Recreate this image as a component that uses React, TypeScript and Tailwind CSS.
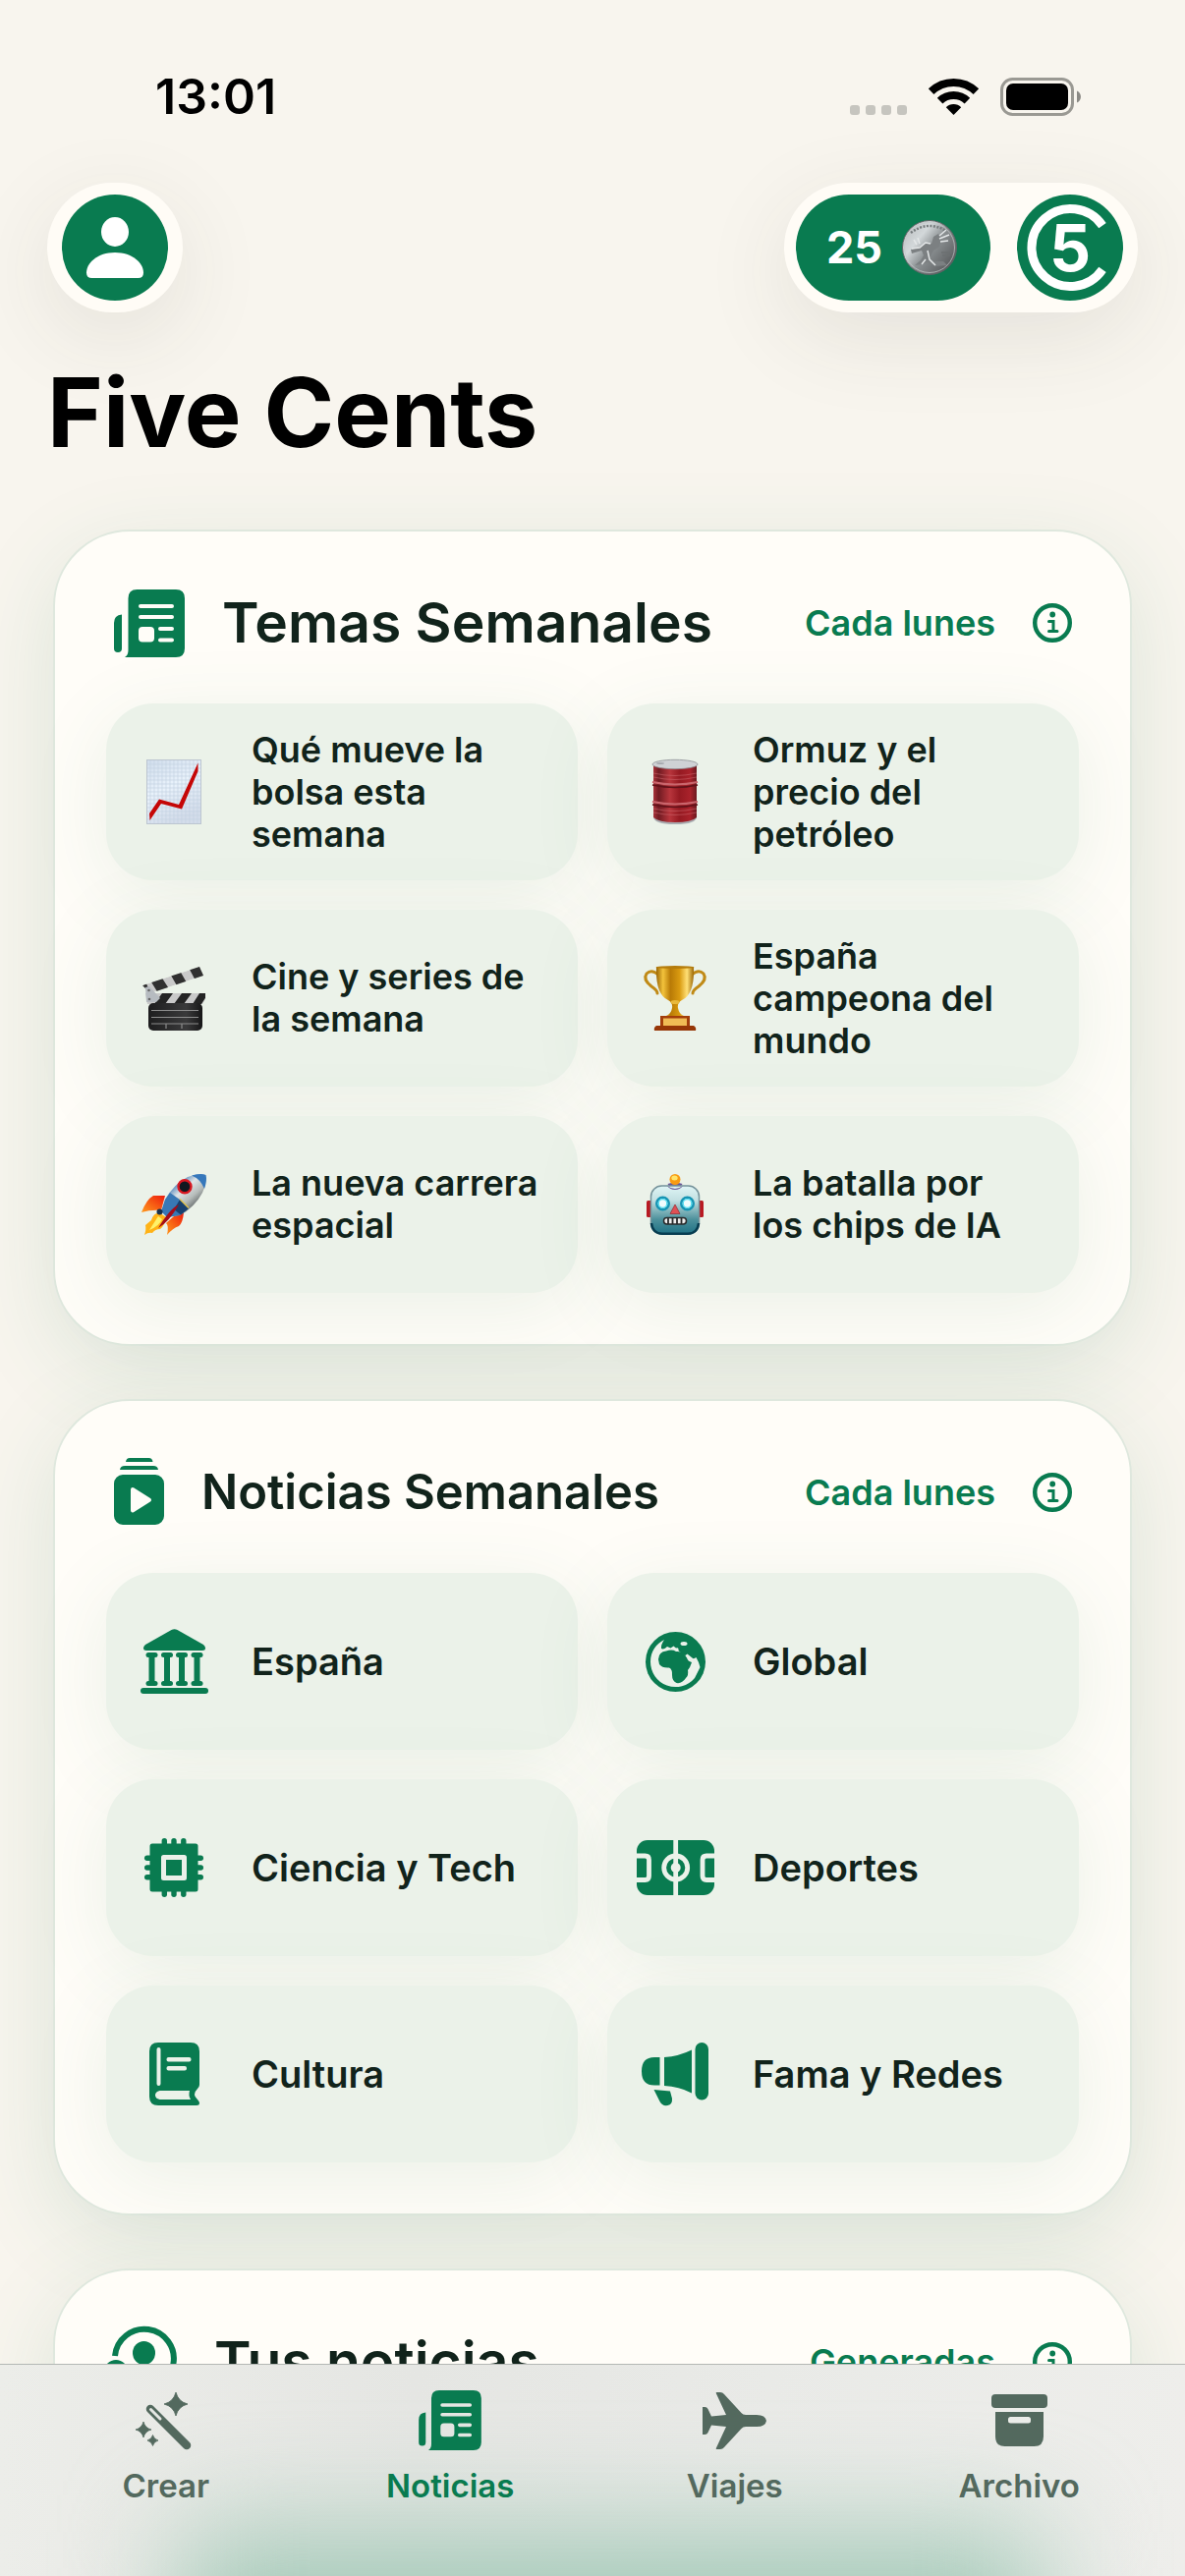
import { useId, type ReactNode } from "react";

/* ---------- drawing helpers ---------- */

const rr = (x: number, y: number, w: number, h: number, r: number) =>
  `M${x + r} ${y}h${w - 2 * r}a${r} ${r} 0 0 1 ${r} ${r}v${h - 2 * r}a${r} ${r} 0 0 1 ${-r} ${r}h${2 * r - w}a${r} ${r} 0 0 1 ${-r} ${-r}v${2 * r - h}a${r} ${r} 0 0 1 ${r} ${-r}z`;

type ArtProps = { w: number; h: number; children: ReactNode };

function Art({ w, h, children }: ArtProps) {
  return (
    <svg
      width={w}
      height={h}
      viewBox={`0 0 ${w} ${h}`}
      fill="currentColor"
      className="shrink-0 overflow-visible"
      aria-hidden="true"
    >
      {children}
    </svg>
  );
}

/* ---------- status bar ---------- */

function WifiIcon() {
  return (
    <Art w={51} h={37}>
      <path d="M2.6 13.2A33 33 0 0 1 48.4 13.2" fill="none" stroke="currentColor" strokeWidth="8" />
      <path d="M11.6 22.6A20 20 0 0 1 39.4 22.6" fill="none" stroke="currentColor" strokeWidth="8" />
      <path d="M25.5 37L17.8 29.2A11 11 0 0 1 33.2 29.2Z" />
    </Art>
  );
}

function BatteryIcon() {
  return (
    <Art w={82} h={39}>
      <rect x="1.5" y="1.5" width="72" height="36" rx="11" fill="none" stroke="#9a9993" strokeWidth="3" />
      <rect x="6" y="6" width="63" height="27" rx="7" />
      <path d="M78 13.5c5.300 2 5.300 10 0 12z" fill="#8b8a85" />
    </Art>
  );
}

/* ---------- header art ---------- */

function PersonIcon() {
  return (
    <Art w={58} h={62}>
      <ellipse cx="29" cy="15" rx="14" ry="15" />
      <path d="M29 36C47 36 58 47 58 56.500Q58 62 52.500 62H5.500Q0 62 0 56.500C0 47 11 36 29 36Z" />
    </Art>
  );
}

function MoonCoin() {
  const id = useId();
  return (
    <Art w={56} h={56}>
      <defs>
        <linearGradient id={id} x1="0" y1="0.1" x2="1" y2="0.9">
          <stop offset="0" stopColor="#b9bdbf" />
          <stop offset="0.3" stopColor="#d3d8da" />
          <stop offset="0.52" stopColor="#8d9294" />
          <stop offset="1" stopColor="#4d4f51" />
        </linearGradient>
      </defs>
      <circle cx="28" cy="28" r="27.500" fill={`url(#${id})`} stroke="#5f6365" />
      <circle cx="28" cy="28" r="25.500" fill="none" stroke="#c3c7c9" strokeWidth="1" opacity="0.7" />
      <path d="M9 13Q26 0 45 11" fill="none" stroke="#777c7e" strokeWidth="2.500" strokeDasharray="2 1.500" />
      <path
        d="M9 30L17 28L23 24L30 24L32 17L37 14L40 19L38 27L32 31L29 37L31 42L42 42L46 46L34 47L26 43L20 45L13 46L19 41L22 36L20 31L10 34Z"
        fill="#7c8082"
      />
      <path
        d="M10 29L18 28L24 23L29 24M38 16L45 10M38 19L48 15M39 22L47 21M15 25L12 20M18 24L16 18M26 31L28 40L34 46M20 45L24 40"
        fill="none"
        stroke="#e3e6e7"
        strokeWidth="1.500"
      />
      <path d="M40 33h11M41 36h8" stroke="#6c7072" strokeWidth="1.300" />
    </Art>
  );
}

/* ---------- section icons ---------- */

function NewsIcon({ small = false }: { small?: boolean }) {
  return (
    <svg
      width={small ? 64 : 72}
      height={small ? 61 : 69}
      viewBox="0 0 72 69"
      fill="currentColor"
      className="shrink-0"
      aria-hidden="true"
    >
      <path
        fillRule="evenodd"
        d={
          "M23.500 0H63Q72 0 72 9V60Q72 69 63 69H11Q14.500 67 14.500 62V9Q14.500 0 23.500 0Z" +
          rr(25, 15, 36, 4, 2) +
          rr(25, 26, 36, 4, 2) +
          rr(25, 38, 16, 15.5, 4) +
          rr(45, 38, 16, 4, 2) +
          rr(45, 49.500, 16, 4, 2)
        }
      />
      <path d="M8 25.500V60Q8 64 4 64Q0 64 0 60V34Q0 26 8 25.500Z" />
    </svg>
  );
}

function PlayStackIcon() {
  return (
    <Art w={51} h={71}>
      <path d="M12 4Q12.500 0 16 0H35.500Q39 0 39.500 4Z" />
      <path d="M6 12Q6.500 8 11 8H40Q44.500 8 45 12Z" />
      <path
        fillRule="evenodd"
        d={rr(0, 17, 51, 51, 9) + "M17 32V53.500Q17.500 56.500 20 55.200L37 44.500Q39 42.700 37 41L20 30.300Q17.500 29 17 32Z"}
      />
    </Art>
  );
}

function PeopleIcon() {
  return (
    <Art w={64} h={72}>
      <path d="M1 30A30 30 0 1 1 24 62" fill="none" stroke="currentColor" strokeWidth="6" />
      <ellipse cx="30.500" cy="27" rx="11.500" ry="12" />
      <path d="M14 52Q20 42 30.500 42Q42 42 48 52Q40 60 30.500 60Z" />
      <circle cx="2" cy="46" r="12" />
    </Art>
  );
}

function InfoIcon() {
  return (
    <Art w={40} h={40}>
      <circle cx="20" cy="20" r="17.800" fill="none" stroke="currentColor" strokeWidth="4.400" />
      <circle cx="20.200" cy="11.500" r="2.900" />
      <path d="M16.500 18.500H21V28.500M16.500 28.500H25" fill="none" stroke="currentColor" strokeWidth="3" strokeLinecap="round" />
    </Art>
  );
}

/* ---------- news tiles ---------- */

function BankIcon() {
  return (
    <Art w={69} h={66}>
      <path d="M31.500 1Q34.500 -0.600 37.500 1L64 16Q66 17.500 66 19.500Q66 22 63 22H6Q3 22 3 19.500Q3 17.500 5 16Z" />
      {[11.500, 27, 42, 57.500].map((x) => (
        <g key={x}>
          <rect x={x - 6} y="24" width="12" height="5" rx="2.500" />
          <rect x={x - 3} y="25" width="6" height="32" />
          <rect x={x - 6} y="53" width="12" height="5" rx="2.500" />
        </g>
      ))}
      <rect x="0" y="60" width="69" height="6" rx="3" />
    </Art>
  );
}

function GlobeIcon() {
  return (
    <Art w={61} h={61}>
      <circle cx="30.500" cy="30.500" r="30.500" />
      <path
        fill="#ebf2ea"
        d="M19 8C11 12 5 20 5 30.500A25.500 25.500 0 0 0 50 47L55.500 36Q54 30 51.500 26Q49 28 47.500 26.500L42.500 22.500L40.500 24L37 22L33.500 19Q34 15.500 31 16.500L28.500 14.500L25.500 16.500L22 15Q19 18.500 16 17Q15.500 13 19 8Z"
      />
      <path d="M13 28Q13.500 20 21 19.500Q27 17.500 31 20Q36 19.500 39 22L42 26.500Q43 30 47 31Q45.500 36 43 39Q44 44 41 47Q37 53 31.500 52Q27 50 27 44Q27.500 38 24 36.500Q17 37 14 33Z" />
      <ellipse cx="39" cy="12" rx="3.500" ry="2" fill="#ebf2ea" />
    </Art>
  );
}

function ChipIcon() {
  const pins = [20.300, 30, 39.800];
  return (
    <Art w={60} h={60}>
      {pins.map((p) => (
        <g key={p}>
          <rect x={p - 2.700} y="0" width="5.400" height="60" rx="2.700" />
          <rect x="0" y={p - 2.700} width="60" height="5.400" rx="2.700" />
        </g>
      ))}
      <rect x="5.500" y="5.500" width="49" height="49" rx="2.500" />
      <rect x="19.500" y="19.500" width="21" height="21" fill="none" stroke="#ebf1ea" strokeWidth="5" strokeLinejoin="round" />
    </Art>
  );
}

function BookIcon() {
  return (
    <Art w={51} h={64}>
      <path
        fillRule="evenodd"
        d={
          "M9 0H42Q51 0 51 9V43Q51 45 49 47Q43 53 49 58Q51 60 51 61.500Q51 64 48 64H9Q0 64 0 55V9Q0 0 9 0Z" +
          rr(7.500, 5, 4, 39, 2) +
          rr(17.500, 15, 25, 4.500, 2) +
          rr(17.500, 24, 20.500, 4.500, 2) +
          "M10.500 49H41Q39.500 53.500 42 58H10.500Q6 57 6 53.500Q6 50 10.500 49Z"
        }
      />
    </Art>
  );
}

function PitchIcon() {
  return (
    <Art w={79} h={56}>
      <rect width="79" height="56" rx="11" />
      <g fill="none" stroke="#ebf2ea" strokeWidth="4.800">
        <path d="M39.700 0V56M0 16H8.500Q12.500 16 12.500 20V36.500Q12.500 40.500 8.500 40.500H0M79 16H71Q67 16 67 20V36.500Q67 40.500 71 40.500H79" />
        <circle cx="39.700" cy="28" r="12" />
      </g>
      <circle cx="39.700" cy="28" r="5" fill="#ebf2ea" />
    </Art>
  );
}

function MegaphoneIcon() {
  return (
    <Art w={68} h={64}>
      <path d="M18.500 15V43.500H13Q0 43.500 0 29.200Q0 15 13 15Z" />
      <path d="M23 15Q38 14 51 7.500V51.500Q38 44.500 23 44Z" />
      <rect x="54.500" width="13.500" height="58.500" rx="6.700" />
      <path d="M12.500 48L29 49.500L31 57Q31.500 63 26.500 64Q21 65 18.500 60Z" />
    </Art>
  );
}

/* ---------- pictorial tiles ---------- */

function ChartArt() {
  const id = useId();
  return (
    <Art w={56} h={66}>
      <defs>
        <linearGradient id={id} x1="0" y1="0" x2="0.400" y2="1">
          <stop offset="0" stopColor="#cfdceb" />
          <stop offset="0.500" stopColor="#e9f2fb" />
          <stop offset="1" stopColor="#d3dcea" />
        </linearGradient>
      </defs>
      <rect width="56" height="66" fill={`url(#${id})`} />
      <path
        d="M4 0V66M8 0V66M12 0V66M16 0V66M20 0V66M24 0V66M28 0V66M32 0V66M36 0V66M40 0V66M44 0V66M48 0V66M52 0V66M0 5H56M0 9H56M0 13H56M0 17H56M0 21H56M0 25H56M0 29H56M0 33H56M0 37H56M0 41H56M0 45H56M0 49H56M0 53H56M0 57H56M0 61H56"
        stroke="#c4d3e3"
        strokeWidth="0.700"
      />
      <rect x="0.500" y="0.500" width="55" height="65" fill="none" stroke="#bcc5d0" />
      <path d="M3 55L13 40.500L33 46L52.500 3.500V12L36 50.500L15 45L3.500 62Z" fill="#c50606" />
    </Art>
  );
}

function BarrelArt() {
  const id = useId();
  return (
    <Art w={46} h={66}>
      <defs>
        <linearGradient id={id}>
          <stop offset="0" stopColor="#a83239" />
          <stop offset="0.120" stopColor="#701b22" />
          <stop offset="0.380" stopColor="#b8353c" />
          <stop offset="0.600" stopColor="#951a22" />
          <stop offset="0.850" stopColor="#a9222b" />
          <stop offset="1" stopColor="#6b1a20" />
        </linearGradient>
      </defs>
      <path d="M1 58Q1 66 23 66Q45 66 45 58Z" fill="#a9acb0" />
      <path d="M1 5H45V59Q40 64 23 64Q6 64 1 59Z" fill={`url(#${id})`} />
      <path d="M1 14Q23 19 45 14M1 18Q23 23 45 18M1 50Q23 55 45 50M1 54Q23 59 45 54" fill="none" stroke="#cf6c72" strokeWidth="1" opacity="0.500" />
      <path d="M0 23Q23 28 46 23M0 43Q23 48 46 43" fill="none" stroke="#c9656c" strokeWidth="2" />
      <path d="M0 26Q23 31 46 26M0 46Q23 51 46 46" fill="none" stroke="#611118" strokeWidth="1.500" />
      <ellipse cx="23" cy="5" rx="23" ry="4.700" fill="#cfd2d5" stroke="#8c8f94" strokeWidth="0.800" />
      <ellipse cx="8" cy="4" rx="4" ry="1" fill="#a7abb0" />
    </Art>
  );
}

function ClapperArt() {
  const id = useId();
  return (
    <Art w={64} h={65}>
      <defs>
        <clipPath id={`${id}a`}>
          <path d="M0 19L58 0L62 9L8 27Z" />
        </clipPath>
        <clipPath id={`${id}b`}>
          <path d="M3 27H64V33L61 38H5Z" />
        </clipPath>
        <linearGradient id={`${id}c`}>
          <stop offset="0" stopColor="#1d1d1e" />
          <stop offset="0.700" stopColor="#3a3a3b" />
          <stop offset="1" stopColor="#161617" />
        </linearGradient>
      </defs>
      <g clipPath={`url(#${id}a)`}>
        <path d="M0 19L58 0L62 9L8 27Z" fill="#c9c9c9" />
        <path d="M8 14L19 10L28 24L16 27ZM28 7L38 4L46 18L36 21ZM47 1L60 -3L66 14L55 16ZM-2 20L4 17L8 27Z" fill="#303030" />
      </g>
      <g clipPath={`url(#${id}b)`}>
        <path d="M3 27H64V38H3Z" fill="#c9c9c9" />
        <path d="M20 27H31L23 38H12ZM40 27H50L42 38H32ZM58 27H67L60 38H51Z" fill="#242424" />
      </g>
      <path d="M3 21L7 20L18 32L14 36H4Z" fill="#b6bbc0" />
      <circle cx="6.500" cy="24" r="1.300" fill="#666" />
      <circle cx="7" cy="33" r="1.300" fill="#666" />
      <rect x="6" y="37" width="55" height="28" rx="5" fill={`url(#${id}c)`} />
      <path d="M9 44.500H57M9 51.500H57M9 58H57M24 58V63M40 58V63" stroke="#8c8c8c" strokeWidth="1.200" />
    </Art>
  );
}

function TrophyArt() {
  const id = useId();
  return (
    <Art w={64} h={66}>
      <defs>
        <linearGradient id={id}>
          <stop offset="0" stopColor="#9a6605" />
          <stop offset="0.180" stopColor="#f3c33c" />
          <stop offset="0.380" stopColor="#b87a06" />
          <stop offset="0.620" stopColor="#d99a10" />
          <stop offset="0.820" stopColor="#ffe076" />
          <stop offset="1" stopColor="#9c6705" />
        </linearGradient>
      </defs>
      <path
        d="M15 9Q8 3 3 8Q-1 14 8 21Q14 25 14 28M49 9Q56 3 61 8Q65 14 56 21Q50 25 50 28"
        fill="none"
        stroke="#c08a16"
        strokeWidth="3"
        strokeLinecap="round"
      />
      <path d="M13 1H51Q52 29 39 35Q34 38 35 43Q36 49 41 51H23Q28 49 29 43Q30 38 25 35Q12 29 13 1Z" fill={`url(#${id})`} />
      <ellipse cx="32" cy="1.500" rx="19.500" ry="1.500" fill="#b57c0b" />
      <ellipse cx="32" cy="37" rx="4.500" ry="2" fill="#e8b83d" />
      <path d="M17 51H47V61H17Z" fill="#a33e0a" />
      <path d="M20 53.500H44V61H20Z" fill="#f0bb55" />
      <path d="M13 61H51Q54 63 53 66H11Q10 63 13 61Z" fill="#963607" />
    </Art>
  );
}

function RocketArt() {
  const id = useId();
  return (
    <Art w={66} h={62}>
      <defs>
        <linearGradient id={id} x1="0.250" y1="0.200" x2="0.800" y2="0.800">
          <stop offset="0" stopColor="#2c6caf" />
          <stop offset="0.350" stopColor="#dfe4e6" />
          <stop offset="0.650" stopColor="#b6bcba" />
          <stop offset="1" stopColor="#4b5153" />
        </linearGradient>
        <linearGradient id={`${id}f`} x1="1" y1="0" x2="0" y2="1">
          <stop offset="0" stopColor="#ee1c0c" />
          <stop offset="1" stopColor="#ff9a1c" />
        </linearGradient>
      </defs>
      <path d="M0 39Q5 26 12 22L24 22L20 37Q10 36 0 39Z" fill={`url(#${id}f)`} />
      <path d="M26 62Q28 52 25 50L33 43L43 39Q42 50 38 53Q32 55 26 62Z" fill={`url(#${id}f)`} />
      <path d="M3 62Q5 56 4 52L10 47Q12 40 18 39L25 44Q24 52 19 56Q14 56 11 60Q7 59 3 62Z" fill="#ffb317" />
      <path d="M8 57L17 43L21 46Q18 53 8 57Z" fill="#fff26a" />
      <path d="M65.500 1Q58 -1 47 3Q33 10 24 26L20 38L26 44L39 42Q54 34 62 19Q67 8 65.500 1Z" fill={`url(#${id})`} />
      <path d="M51 1.500Q61 -1 65.500 1Q67 6 64 15Q60 5 51 1.500Z" fill="#3678bb" />
      <path d="M29 19L39 26L48 35L39 42L26 44L20 38L24 26Z" fill="#3878b5" />
      <path d="M39 26L48 35L40 41.500L33 36Z" fill="#18406f" />
      <path d="M39 25.500L48 34.500" stroke="#dfc04e" strokeWidth="1.500" />
      <path d="M38 31Q29 35 17 55Q28 49 38 31Z" fill="#a40d18" />
      <circle cx="44" cy="12.700" r="6.500" fill="#111820" stroke="#d81720" strokeWidth="2.400" />
      <circle cx="18.500" cy="38.500" r="3" fill="#17314d" />
    </Art>
  );
}

function RobotArt() {
  const id = useId();
  return (
    <Art w={58} h={62}>
      <defs>
        <linearGradient id={id} x1="0" y1="0" x2="0" y2="1">
          <stop offset="0" stopColor="#dff5f5" />
          <stop offset="0.300" stopColor="#c3e0e2" />
          <stop offset="0.700" stopColor="#4c909b" />
          <stop offset="1" stopColor="#1f7184" />
        </linearGradient>
      </defs>
      <rect y="27" width="6" height="17" rx="1.500" fill="#b81a22" />
      <rect x="52" y="27" width="6" height="17" rx="1.500" fill="#b81a22" />
      <path d="M21.500 10Q29 7 36.500 10Q34 15 29 15.500Q24 15 21.500 10Z" fill="#6b5796" />
      <circle cx="29" cy="5.500" r="5.500" fill="#f89b12" />
      <ellipse cx="28.500" cy="4" rx="3.200" ry="2.500" fill="#ffe46a" />
      <rect x="4.500" y="12" width="49" height="49" rx="11" fill={`url(#${id})`} stroke="#74929a" strokeWidth="1.500" />
      <path d="M5 50Q6 60.500 16 60.800H42Q52 60.500 53 50" fill="none" stroke="#073d51" strokeWidth="2.500" />
      <path d="M21 12Q29 18 37 12Q34 16 29 16Q24 16 21 12Z" fill="#6b5796" />
      {[16.500, 41.500].map((x) => (
        <g key={x}>
          <circle cx={x} cy="30" r="6.200" fill="#effcfd" stroke="#1694b3" strokeWidth="2.600" />
          <circle cx={x} cy="30" r="4.300" fill="none" stroke="#51dcf0" strokeWidth="1.300" />
        </g>
      ))}
      <path d="M29 31L34 40.500H24Z" fill="#df5055" stroke="#983239" strokeWidth="0.800" />
      <rect x="17.500" y="44.500" width="23" height="6.500" rx="3.200" fill="#eee" stroke="#2a2b2c" strokeWidth="1.500" />
      <path d="M22 45V51M26.500 45V51M31 45V51M35.500 45V51" stroke="#2a2b2c" strokeWidth="1.800" />
    </Art>
  );
}

/* ---------- tab icons ---------- */

const spark = (x: number, y: number, r: number) => {
  const k = r * 0.2;
  return `M${x} ${y - r}Q${x + k} ${y - k} ${x + r} ${y}Q${x + k} ${y + k} ${x} ${y + r}Q${x - k} ${y + k} ${x - r} ${y}Q${x - k} ${y - k} ${x} ${y - r}Z`;
};

function WandIcon() {
  return (
    <Art w={62} h={58}>
      <path d="M15 17L52 54" stroke="currentColor" strokeWidth="8.500" strokeLinecap="round" />
      <path d="M15.500 17.500L25 27" stroke="#e5e7e3" strokeWidth="3" strokeLinecap="round" />
      <path d={spark(41, 12, 12) + spark(8, 38, 8) + spark(17.500, 49, 5.500)} stroke="currentColor" strokeWidth="0.800" />
    </Art>
  );
}

function PlaneIcon() {
  return (
    <Art w={65} h={58}>
      <path d="M65 29Q64 23 55 23H44Q41 23 39.500 21L22 2Q20.500 0 18 0H14Q13.500 0 14 1.500L24 23L9 24.500L5.500 17Q4.500 15 2.500 15H0V43H2.500Q4.500 43 5.500 41L9 33.500L24 35L14 56.500Q13.500 58 14 58H18Q20.500 58 22 56L39.500 37Q41 35 44 35H55Q64 35 65 29Z" />
    </Art>
  );
}

function ArchiveIcon() {
  return (
    <Art w={57} h={53}>
      <rect width="57" height="14" rx="4" />
      <path fillRule="evenodd" d={"M4 18H53V43Q53 53 43.500 53H13.500Q4 53 4 43Z" + rr(17, 23, 23, 6.500, 2.500)} />
    </Art>
  );
}

/* ---------- page parts ---------- */

type Topic = { label: string; icon: ReactNode };

function Tile({ topic, large }: { topic: Topic; large: boolean }) {
  return (
    <button
      type="button"
      className="flex h-[180px] items-center gap-[38px] rounded-[48px] bg-[#ebf2e9] pr-8 pl-7 text-left text-[#11231b] shadow-[0_16px_80px_rgba(60,125,85,0.1)]"
    >
      <span className="flex w-[82px] shrink-0 justify-center text-[#097b50]">{topic.icon}</span>
      <span className={large ? "text-[38px] leading-[46px] font-semibold" : "text-[36px] leading-[43px] font-semibold"}>
        {topic.label}
      </span>
    </button>
  );
}

type CardProps = {
  title: string;
  note: string;
  icon: ReactNode;
  topics: Topic[];
  titleSize: string;
  large?: boolean;
};

function Card({ title, note, icon, topics, titleSize, large = false }: CardProps) {
  return (
    <section className="rounded-[78px] border-2 border-[#dfe8de] bg-[#fffdf8] p-[52px] shadow-[0_24px_90px_rgba(40,125,85,0.13)]">
      <header className="mb-[41px] flex h-[82px] items-center gap-[38px] pl-2 text-[#097b50]">
        {icon}
        <h2 className={titleSize}>{title}</h2>
        <span className="ml-auto text-[36px] font-semibold whitespace-nowrap">{note}</span>
        <button type="button" aria-label={`Información sobre ${title}`} className="mr-[7px] size-10">
          <InfoIcon />
        </button>
      </header>
      <div className="grid grid-cols-2 gap-[30px]">
        {topics.map((topic) => (
          <Tile key={topic.label} topic={topic} large={large} />
        ))}
      </div>
    </section>
  );
}

const weekly: Topic[] = [
  { label: "Qué mueve la bolsa esta semana", icon: <ChartArt /> },
  { label: "Ormuz y el precio del petróleo", icon: <BarrelArt /> },
  { label: "Cine y series de la semana", icon: <ClapperArt /> },
  { label: "España campeona del mundo", icon: <TrophyArt /> },
  { label: "La nueva carrera espacial", icon: <RocketArt /> },
  { label: "La batalla por los\u00a0chips de IA", icon: <RobotArt /> },
];

const news: Topic[] = [
  { label: "España", icon: <BankIcon /> },
  { label: "Global", icon: <GlobeIcon /> },
  { label: "Ciencia y Tech", icon: <ChipIcon /> },
  { label: "Deportes", icon: <PitchIcon /> },
  { label: "Cultura", icon: <BookIcon /> },
  { label: "Fama y Redes", icon: <MegaphoneIcon /> },
];

const tabs = [
  { label: "Crear", icon: <WandIcon />, active: false },
  { label: "Noticias", icon: <NewsIcon small />, active: true },
  { label: "Viajes", icon: <PlaneIcon />, active: false },
  { label: "Archivo", icon: <ArchiveIcon />, active: false },
];

export default function App() {
  return (
    <div className="flex h-screen flex-col bg-[#f8f5ee] font-['Inter',sans-serif] text-black">
      <main className="min-h-0 flex-1 overflow-y-auto [scrollbar-width:none]">
        <div className="mt-[62px] mb-[52px] flex h-[72px] items-center justify-between pr-[106px] pl-[158px]">
          <time className="text-[50px] font-semibold">13:01</time>
          <div className="flex items-center">
            <span className="mt-[27px] mr-[22px] flex gap-[6px]">
              {[0, 1, 2, 3].map((n) => (
                <span key={n} className="size-[10px] rounded-[3px] bg-[#c6c5bf]" />
              ))}
            </span>
            <WifiIcon />
            <span className="w-[22px]" />
            <BatteryIcon />
          </div>
        </div>

        <div className="flex items-center justify-between px-12">
          <button
            type="button"
            aria-label="Perfil"
            className="flex h-[132px] w-[138px] items-center justify-center rounded-full bg-[#fffcf6] shadow-[0_24px_90px_rgba(60,60,50,0.1)]"
          >
            <span className="flex size-[108px] items-center justify-center rounded-full bg-[#097b50] text-white">
              <PersonIcon />
            </span>
          </button>
          <div className="flex h-[132px] items-center gap-[27px] rounded-full bg-[#fffcf6] pr-[15px] pl-3 shadow-[0_24px_90px_rgba(60,60,50,0.1)]">
            <button
              type="button"
              className="flex h-[108px] items-center gap-5 rounded-full bg-[#097b50] pr-[34px] pl-[31px] text-[45px] font-bold text-white"
            >
              25
              <MoonCoin />
            </button>
            <button
              type="button"
              aria-label="Five Cents"
              className="relative flex size-[108px] items-center justify-center rounded-full bg-[#097b50] text-[66px] leading-none font-bold text-white"
            >
              5
              <span className="absolute inset-0">
                <Art w={108} h={108}>
                  <path d="M87 31.600A39.500 39.500 0 1 0 87 76.400" fill="none" stroke="currentColor" strokeWidth="9" />
                </Art>
              </span>
            </button>
          </div>
        </div>

        <h1 className="mt-[42px] mb-[59px] px-12 text-[97px] leading-[120px] font-bold">Five Cents</h1>

        <div className="flex flex-col gap-[54px] px-[54px] pb-[54px]">
          <Card
            title="Temas Semanales"
            note="Cada lunes"
            icon={<NewsIcon />}
            topics={weekly}
            titleSize="text-[57px] font-semibold text-[#11231b] whitespace-nowrap"
          />
          <Card
            title="Noticias Semanales"
            note="Cada lunes"
            icon={<PlayStackIcon />}
            topics={news}
            titleSize="text-[49px] font-semibold text-[#11231b] whitespace-nowrap"
            large
          />
          <Card
            title="Tus noticias"
            note="Generadas"
            icon={<PeopleIcon />}
            topics={[]}
            titleSize="text-[57px] font-semibold text-[#11231b] whitespace-nowrap"
          />
        </div>
      </main>

      <nav className="relative z-10 grid h-[216px] shrink-0 grid-cols-4 overflow-hidden border-t border-[#b4b8b4] bg-[linear-gradient(90deg,#ecede9_0%,#e5e6e3_35%,#e9eae7_65%,#eeeeeb_100%)] px-6 pt-[26px]">
        <span
          aria-hidden="true"
          className="absolute top-[170px] right-[12%] left-[15%] h-[300px] bg-[#a5cab9] blur-[56px]"
        />
        {tabs.map((tab) => (
          <button
            key={tab.label}
            type="button"
            aria-current={tab.active ? "page" : undefined}
            className={
              tab.active
                ? "relative flex h-[128px] flex-col items-center text-[#097b50]"
                : "relative flex h-[128px] flex-col items-center text-[#53695e]"
            }
          >
            <span className="flex h-[61px] items-center">{tab.icon}</span>
            <span className="mt-[15px] text-[33px] leading-[42px] font-semibold">{tab.label}</span>
          </button>
        ))}
      </nav>
    </div>
  );
}
